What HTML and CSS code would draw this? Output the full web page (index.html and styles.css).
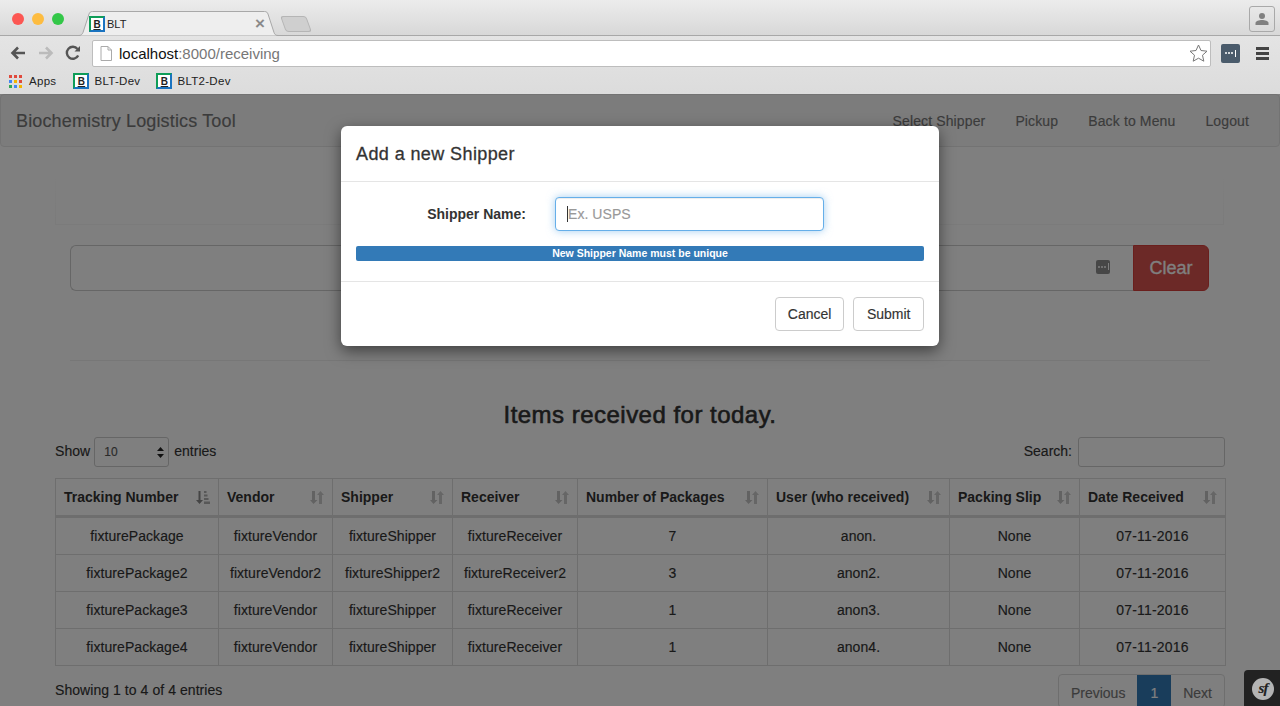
FILE: index.html
```html
<!DOCTYPE html>
<html lang="en">
<head>
  <meta charset="UTF-8" />
  <title>BLT</title>
  <link rel="stylesheet" href="styles.css">
</head>
<body>
  <!-- Browser window chrome -->
  <header class="chrome">
    <div class="tabstrip">
      <div class="lights">
        <span class="light red"></span>
        <span class="light yellow"></span>
        <span class="light green"></span>
      </div>
      <div class="tab">
        <svg class="tab-shape" width="203" height="25" viewBox="0 0 203 25"><path d="M0 24.500h2c2 0 3-1 4-3L12 3c.6-1.600 1.500-2.500 3.500-2.500h172c2 0 3 1 3.500 2.500l6 18.500c.7 2 2 3 4 3h2" fill="#eeeeee" stroke="#a8a8a8"/></svg>
        <span class="favicon">B</span>
        <span class="tab-title">BLT</span>
        <span class="tab-close">×</span>
      </div>
      <div class="tab-new"></div>
      <div class="profile">
        <svg width="14" height="14" viewBox="0 0 14 14"><circle cx="7" cy="4" r="3" fill="#808080"/><path d="M0.500 13v-2c0-2 3.500-3 6.500-3s6.500 1 6.500 3v2z" fill="#808080"/></svg>
      </div>
    </div>
    <div class="toolbar">
      <svg class="nav-icon" width="16" height="14" viewBox="0 0 16 14"><path d="M15 7H3M8 1.500 2.500 7 8 12.500" fill="none" stroke="#555" stroke-width="2.600"/></svg>
      <svg class="nav-icon" width="16" height="14" viewBox="0 0 16 14"><path d="M1 7h12M8 1.500 13.500 7 8 12.500" fill="none" stroke="#bbb" stroke-width="2.600"/></svg>
      <svg class="nav-icon" width="16" height="16" viewBox="0 0 16 16"><path d="M13.200 10.500A6 6 0 1 1 12.500 4" fill="none" stroke="#555" stroke-width="2.400"/><path d="M9.500 6.500H15V1z" fill="#555"/></svg>
      <div class="omnibox">
        <svg width="12" height="15" viewBox="0 0 12 15"><path d="M1 .5h7l3.500 3.500v10.500H1z" fill="#fff" stroke="#aaa"/><path d="M8 .5V4h3.500" fill="none" stroke="#aaa"/></svg>
        <span class="url"><span class="url-host">localhost</span>:8000/receiving</span>
        <svg class="star" width="19" height="18" viewBox="0 0 19 18"><path d="M9.500 1l2.500 5.500 6 .7-4.500 4 1.300 6-5.300-3-5.300 3 1.300-6-4.500-4 6-.7z" fill="#fff" stroke="#777"/></svg>
      </div>
      <div class="ext-pass"><i></i><i></i><i></i><b></b></div>
      <div class="menu-icon"><i></i><i></i><i></i></div>
    </div>
    <div class="bookmarks">
      <span class="bookmark">
        <span class="apps-grid">
          <i class="r"></i><i class="r"></i><i class="r"></i>
          <i class="b"></i><i class="y"></i><i class="r"></i>
          <i class="g"></i><i class="b"></i><i class="y"></i>
        </span>
        Apps
      </span>
      <span class="bookmark"><span class="favicon">B</span>BLT-Dev</span>
      <span class="bookmark"><span class="favicon">B</span>BLT2-Dev</span>
    </div>
  </header>

  <main class="page">
    <nav class="navbar">
      <a class="brand">Biochemistry Logistics Tool</a>
      <ul class="nav-links">
        <li>Select Shipper</li>
        <li>Pickup</li>
        <li>Back to Menu</li>
        <li>Logout</li>
      </ul>
    </nav>

    <div class="top-panel"></div>

    <div class="container">
      <div class="scan-row">
        <div class="scan-input">
          <div class="ext-pass small"><i></i><i></i><i></i><b></b></div>
        </div>
        <button class="btn-clear">Clear</button>
      </div>
      <hr class="rule">
    </div>

    <section class="items">
      <h3 class="items-title">Items received for today.</h3>
      <div class="dt-top">
        <label class="dt-length"><span class="dt-word">Show</span>
          <span class="dt-select">10
            <svg width="7" height="11" viewBox="0 0 7 11"><path d="M3.500 0 7 4H0zM3.500 11 0 7h7z" fill="#222"/></svg>
          </span>
          <span class="dt-word dt-entries">entries</span>
        </label>
        <label class="dt-search"><span class="dt-word">Search:</span> <span class="dt-search-box"></span></label>
      </div>

      <table class="dt">
        <thead>
          <tr>
            <th class="col-tracking">Tracking Number<svg class="sort" width="14" height="13" viewBox="0 0 14 13"><path d="M2.500 0h2v9h2.500l-3.500 4L0 9h2.500z" fill="#8a8a8a"/><path d="M8 0h2.500v2H8zM8 3.500h3.500v2H8zM8 7h4.500v2H8zM8 10.500h6V13H8z" fill="#b0b0b0"/></svg></th>
            <th class="col-vendor">Vendor<svg class="sort" width="14" height="13" viewBox="0 0 14 13"><use href="#sort-both"/></svg></th>
            <th class="col-shipper">Shipper<svg class="sort" width="14" height="13" viewBox="0 0 14 13"><use href="#sort-both"/></svg></th>
            <th class="col-receiver">Receiver<svg class="sort" width="14" height="13" viewBox="0 0 14 13"><use href="#sort-both"/></svg></th>
            <th class="col-packages">Number of Packages<svg class="sort" width="14" height="13" viewBox="0 0 14 13"><use href="#sort-both"/></svg></th>
            <th class="col-user">User (who received)<svg class="sort" width="14" height="13" viewBox="0 0 14 13"><use href="#sort-both"/></svg></th>
            <th class="col-slip">Packing Slip<svg class="sort" width="14" height="13" viewBox="0 0 14 13"><use href="#sort-both"/></svg></th>
            <th class="col-date">Date Received<svg class="sort" width="14" height="13" viewBox="0 0 14 13"><use href="#sort-both"/></svg></th>
          </tr>
        </thead>
        <tbody>
          <tr><td>fixturePackage</td><td>fixtureVendor</td><td>fixtureShipper</td><td>fixtureReceiver</td><td>7</td><td>anon.</td><td>None</td><td>07-11-2016</td></tr>
          <tr><td>fixturePackage2</td><td>fixtureVendor2</td><td>fixtureShipper2</td><td>fixtureReceiver2</td><td>3</td><td>anon2.</td><td>None</td><td>07-11-2016</td></tr>
          <tr><td>fixturePackage3</td><td>fixtureVendor</td><td>fixtureShipper</td><td>fixtureReceiver</td><td>1</td><td>anon3.</td><td>None</td><td>07-11-2016</td></tr>
          <tr><td>fixturePackage4</td><td>fixtureVendor</td><td>fixtureShipper</td><td>fixtureReceiver</td><td>1</td><td>anon4.</td><td>None</td><td>07-11-2016</td></tr>
        </tbody>
      </table>

      <div class="dt-bottom">
        <span class="dt-info">Showing 1 to 4 of 4 entries</span>
        <ul class="pagination">
          <li>Previous</li>
          <li class="active">1</li>
          <li>Next</li>
        </ul>
      </div>
    </section>

    <svg class="sprite" width="0" height="0">
      <defs>
        <g id="sort-both">
          <path d="M2 0h3v9h2.500l-4 4-3.500-4H2z" fill="#c4c4c4"/>
          <path d="M9 13h3V4h2L10.500 0 7 4h2z" fill="#cdcdcd"/>
        </g>
      </defs>
    </svg>

    <div class="backdrop"></div>

    <div class="sf-toolbar">
      <span class="sf-logo">sf</span>
    </div>

    <div class="modal">
      <div class="modal-header">
        <h4 class="modal-title">Add a new Shipper</h4>
      </div>
      <div class="modal-body">
        <div class="form-row">
          <label class="form-label">Shipper Name:</label>
          <div class="form-input"><span class="caret"></span>Ex. USPS</div>
        </div>
        <div class="progress-note">New Shipper Name must be unique</div>
      </div>
      <div class="modal-footer">
        <button class="btn">Cancel</button>
        <button class="btn btn-submit">Submit</button>
      </div>
    </div>
  </main>
</body>
</html>
```

FILE: styles.css
```css
* {
  box-sizing: border-box;
}

html, body {
  margin: 0;
  height: 706px;
  overflow: hidden;
}

body {
  font-family: "Liberation Sans", Arial, sans-serif;
  font-size: 14px;
  color: #333;
  background: #fff;
}

/* Browser chrome */
.chrome {
  height: 94px;
  background: linear-gradient(#e9e9e9, #dcdcdc);
  font-size: 11px;
  color: #222;
}

.tabstrip {
  height: 36px;
  display: flex;
  position: relative;
  border-bottom: 1px solid #a8a8a8;
  background: linear-gradient(#ececec, #d8d8d8);
}

.lights {
  display: flex;
  gap: 8px;
  padding: 13px 0 0 12px;
  width: 77px;
}

.light {
  width: 12px;
  height: 12px;
  border-radius: 50%;
}

.red { background: #fc5753; }
.yellow { background: #fdbc40; }
.green { background: #33c748; }

.tab {
  position: relative;
  width: 203px;
  height: 25px;
  margin-top: 11px;
  padding: 1px 0 0 12px;
  display: flex;
  align-items: center;
}

.tab-shape {
  position: absolute;
  top: 0;
  left: 0;
}

.tab .favicon,
.tab-title,
.tab-close {
  position: relative;
}

.tab-title {
  margin-left: 2px;
  flex: 1;
  font-size: 11px;
  color: #222;
}

.tab-close {
  font-size: 17px;
  font-weight: bold;
  color: #8a8a8a;
  margin-right: 15px;
}

.tab-new {
  width: 26px;
  height: 16px;
  margin: 16px 0 0 3px;
  background: #cfcfcf;
  border: 1px solid #b5b5b5;
  border-radius: 3px;
  transform: skewX(20deg);
}

.profile {
  position: absolute;
  top: 6px;
  right: 5px;
  width: 26px;
  height: 26px;
  display: flex;
  align-items: center;
  justify-content: center;
  border: 1px solid #a9a9a9;
  border-radius: 3px;
}

.favicon {
  width: 16px;
  height: 16px;
  flex: none;
  display: flex;
  align-items: flex-end;
  justify-content: center;
  font-size: 10px;
  font-weight: bold;
  line-height: 11px;
  text-decoration: underline;
  color: #222;
  background: #fff;
  border: 2px solid #0f9d58;
  border-right-color: #1a73c0;
  border-bottom-color: #1a73c0;
}

.toolbar {
  height: 32px;
  display: flex;
  align-items: center;
  padding: 2px 0 0 10px;
}

.nav-icon {
  flex: none;
  margin-right: 12px;
}

.nav-icon:nth-child(3) {
  margin: 0 11px 0 -1px;
}

.omnibox {
  width: 1119px;
  height: 27px;
  display: flex;
  align-items: center;
  gap: 7px;
  padding: 0 2px 0 7px;
  background: #fff;
  border: 1px solid #bdbdbd;
  border-radius: 2px;
}

.url {
  flex: 1;
  padding-top: 1px;
  font-size: 15px;
  color: #777;
}

.url-host {
  color: #111;
}

.ext-pass {
  width: 19px;
  height: 19px;
  margin-left: 10px;
  flex: none;
  display: flex;
  align-items: center;
  justify-content: center;
  gap: 1px;
  background: #4a5b6b;
  border-radius: 2px;
}

.ext-pass i {
  width: 2px;
  height: 2px;
  border-radius: 50%;
  background: #fff;
}

.ext-pass b {
  width: 1px;
  height: 7px;
  margin-left: 1px;
  background: #fff;
}

.menu-icon {
  margin-left: 16px;
  display: flex;
  flex-direction: column;
  gap: 2px;
}

.menu-icon i {
  display: block;
  width: 13px;
  height: 3px;
  background: #444;
}

.bookmarks {
  height: 26px;
  display: flex;
  align-items: center;
  padding-left: 9px;
  gap: 16px;
}

.bookmark {
  display: flex;
  align-items: center;
  gap: 5px;
  font-size: 11.500px;
  letter-spacing: 0.3px;
}

.bookmark:first-child {
  gap: 6px;
  margin-right: 1px;
}

.apps-grid {
  display: grid;
  grid-template-columns: repeat(3, 3px);
  gap: 2px;
  margin-right: 1px;
}

.apps-grid i {
  height: 3px;
}

.apps-grid .r { background: #e0493c; }
.apps-grid .b { background: #4285f4; }
.apps-grid .y { background: #f4b400; }
.apps-grid .g { background: #34a853; }

/* Page beneath the modal */
.page {
  position: relative;
  height: 612px;
  overflow: hidden;
  background: #fff;
  font-size: 14px;
  letter-spacing: 0.06px;
  -webkit-text-stroke: 0.15px;
}

.navbar {
  height: 53px;
  display: flex;
  align-items: center;
  justify-content: space-between;
  background: #f8f8f8;
  border: 1px solid #e7e7e7;
  border-radius: 4px;
}

.brand {
  margin-left: 15px;
  padding-top: 1px;
  font-size: 18px;
  letter-spacing: 0.15px;
  color: #777;
}

.nav-links {
  display: flex;
  gap: 30px;
  margin: 0 30px 0 0;
  padding: 0;
  list-style: none;
  letter-spacing: 0.13px;
  color: #777;
}

.top-panel {
  height: 79px;
  margin: -1px 56px 0 55px;
  border: 1px solid #f6f6f6;
  border-top: 0;
  border-image: linear-gradient(transparent 30%, #f6f6f6) 1;
}

.container {
  padding: 0 70px;
}

.scan-row {
  display: flex;
  height: 46px;
  margin: 20px 1px 0 0;
}

.scan-input {
  flex: 1;
  display: flex;
  align-items: center;
  justify-content: flex-end;
  padding: 0 23px 3px 0;
  background: #fff;
  border: 1px solid #ccc;
  border-right: 0;
  border-radius: 6px 0 0 6px;
}

.ext-pass.small {
  width: 14px;
  height: 14px;
  margin: 0;
  background: #8f8f8f;
}

.btn-clear {
  width: 76px;
  padding: 0;
  font: 18px "Liberation Sans", Arial, sans-serif;
  -webkit-text-stroke: 0.3px;
  color: #fff;
  background: #d9534f;
  border: 1px solid #d43f3a;
  border-radius: 0 6px 6px 0;
}

.rule {
  margin: 69px 0 0;
  border: 0;
  border-top: 1px solid #eee;
}

.items {
  padding: 0 55px;
}

.items-title {
  margin: 40px 0 0;
  height: 28px;
  line-height: 28px;
  text-align: center;
  font-size: 24px;
  font-weight: normal;
  letter-spacing: 0.48px;
  -webkit-text-stroke: 0.6px;
  color: #333;
}

.dt-top {
  display: flex;
  justify-content: space-between;
  align-items: center;
  height: 30px;
  margin-top: 8px;
}

.dt-length,
.dt-search {
  display: flex;
  align-items: center;
  gap: 4px;
}

.dt-search {
  gap: 6px;
  letter-spacing: 0;
}

.dt-word {
  padding-bottom: 2px;
}

.dt-select {
  width: 75px;
  height: 30px;
  display: flex;
  align-items: center;
  justify-content: space-between;
  padding: 0 4px 0 9px;
  font-size: 12px;
  color: #555;
  background: #fff;
  border: 1px solid #ccc;
  border-radius: 3px;
}

.dt-entries {
  margin-left: 1px;
  letter-spacing: 0;
}

.dt-search-box {
  width: 147px;
  height: 30px;
  background: #fff;
  border: 1px solid #ccc;
  border-radius: 3px;
}

.dt {
  width: 1170px;
  margin-top: 11px;
  border-collapse: collapse;
  table-layout: fixed;
}

.dt th,
.dt td {
  border: 1px solid #ddd;
}

.dt th {
  position: relative;
  height: 38px;
  padding: 0 8px;
  text-align: left;
  font-weight: bold;
  letter-spacing: 0;
  -webkit-text-stroke: 0;
  color: #333;
  border-bottom: 3px solid #ddd;
}

.dt td {
  height: 37px;
  padding: 0;
  text-align: center;
  color: #333;
}

.dt tbody tr:first-child td {
  height: 38px;
}

.dt td:last-child {
  letter-spacing: 0.2px;
}

.sort {
  position: absolute;
  top: 12px;
  right: 8px;
}

.col-tracking { width: 163px; }
.col-vendor { width: 114px; }
.col-shipper { width: 120px; }
.col-receiver { width: 125px; }
.col-packages { width: 190px; }
.col-user { width: 182px; }
.col-slip { width: 130px; }
.col-date { width: 146px; }

.dt-bottom {
  display: flex;
  justify-content: space-between;
  align-items: flex-start;
  margin-top: 8px;
}

.dt-info {
  padding-top: 8px;
}

.pagination {
  display: flex;
  height: 34px;
  margin: 0;
  padding: 0;
  list-style: none;
  letter-spacing: 0;
  color: #777;
  background: #fff;
  border: 1px solid #ddd;
  border-radius: 4px;
}

.pagination li {
  padding: 0 12px;
  line-height: 36px;
}

.pagination .active {
  padding: 0 13px;
  color: #fff;
  background: #337ab7;
}

.sprite {
  position: absolute;
}

.backdrop {
  position: absolute;
  inset: 0;
  background: rgba(0, 0, 0, 0.5);
}

.sf-toolbar {
  position: absolute;
  right: 0;
  bottom: 0;
  width: 36px;
  height: 36px;
  padding: 8px 0 0 8px;
  background: #222;
  border-radius: 4px 0 0 0;
}

.sf-logo {
  display: block;
  width: 22px;
  height: 22px;
  text-align: center;
  font: italic bold 15px/21px "Liberation Serif", serif;
  letter-spacing: -1px;
  color: #222;
  background: #b4b4b4;
  border-radius: 50%;
}

/* Modal */
.modal {
  position: absolute;
  top: 32px;
  left: 341px;
  width: 598px;
  height: 220px;
  background: #fff;
  border-radius: 6px;
  box-shadow: 0 5px 15px rgba(0, 0, 0, 0.5);
}

.modal-header {
  height: 56px;
  padding: 15px;
  border-bottom: 1px solid #e5e5e5;
}

.modal-title {
  margin: 0;
  font-size: 18px;
  line-height: 26px;
  font-weight: 500;
  letter-spacing: 0.4px;
  -webkit-text-stroke: 0.3px;
  color: #333;
}

.modal-body {
  height: 99px;
  padding: 15px;
}

.form-row {
  display: flex;
  align-items: center;
  height: 34px;
}

.form-label {
  width: 170px;
  text-align: right;
  font-weight: bold;
  letter-spacing: 0;
  -webkit-text-stroke: 0;
}

.form-input {
  width: 269px;
  height: 34px;
  margin-left: 29px;
  padding-left: 11px;
  display: flex;
  align-items: center;
  color: #999;
  background: #fff;
  border: 1px solid #66afe9;
  border-radius: 4px;
  box-shadow: inset 0 1px 1px rgba(0, 0, 0, 0.075), 0 0 8px rgba(102, 175, 233, 0.6);
}

.caret {
  width: 1px;
  height: 16px;
  background: #333;
}

.progress-note {
  height: 15px;
  margin-top: 15px;
  text-align: center;
  font-size: 10.500px;
  line-height: 15px;
  font-weight: bold;
  letter-spacing: 0;
  -webkit-text-stroke: 0;
  color: #fff;
  background: #337ab7;
  border-radius: 2px;
}

.modal-footer {
  display: flex;
  justify-content: flex-end;
  gap: 9px;
  padding: 15px;
  border-top: 1px solid #e5e5e5;
}

.btn {
  height: 34px;
  padding: 0 12px;
  font: 14px "Liberation Sans", Arial, sans-serif;
  color: #333;
  background: #fff;
  border: 1px solid #ccc;
  border-radius: 4px;
}

.btn-submit {
  padding: 0 12.500px;
}
```
